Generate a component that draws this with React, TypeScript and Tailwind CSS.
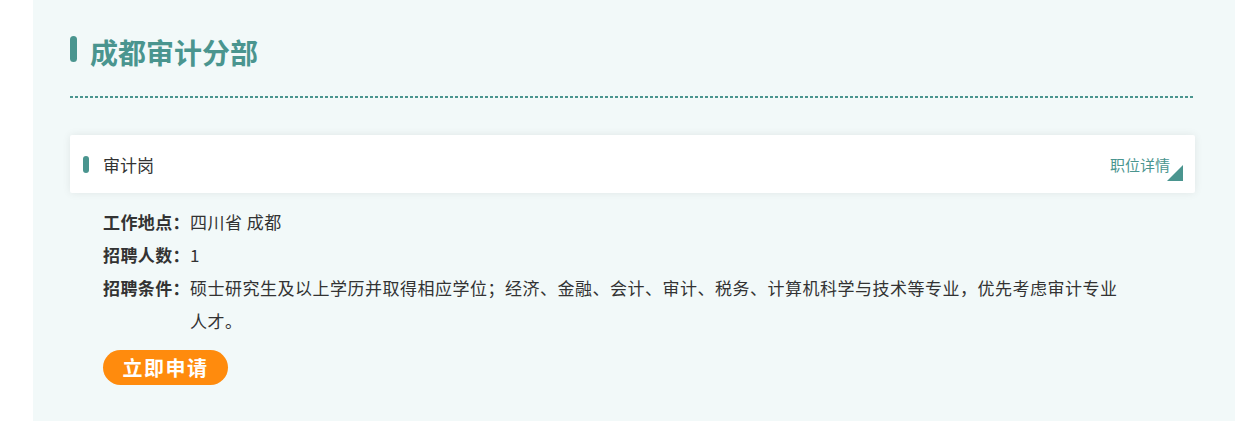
import React from 'react';

const font = { fontFamily: '"Microsoft YaHei", "Noto Sans CJK SC", "Noto Sans", sans-serif' };

const ROWS = [
  { label: '工作地点：', value: '四川省 成都' },
  { label: '招聘人数：', value: '1' },
  {
    label: '招聘条件：',
    value:
      '硕士研究生及以上学历并取得相应学位；经济、金融、会计、审计、税务、计算机科学与技术等专业，优先考虑审计专业人才。',
  },
];

export default function App() {
  return (
    <div className="flex min-h-[421px] w-full bg-white" style={font}>
      <section className="ml-[33px] flex-1 bg-[#f2f9f9] pl-[37px] pr-[40px] pt-[32px] pb-[37px]">
        {/* Header */}
        <div className="flex h-[34px] items-center">
          <span className="h-[26px] w-[7px] rounded-full bg-[#4a958f]" />
          <h2 className="ml-[13px] mt-[6px] text-[28px] font-bold leading-[34px] text-[#4a958f]">
            成都审计分部
          </h2>
        </div>
        <div className="mt-[30px] h-[2px] w-[1123px] bg-[linear-gradient(to_right,#4a958f_60%,transparent_60%)] bg-[length:5px_2px]" />

        {/* Job card */}
        <div className="relative mt-[37px] flex h-[58px] items-center rounded-[2px] bg-white pl-[13px] pr-[25px] shadow-[0_0_8px_rgba(0,0,0,0.08)]">
          <span className="h-[17px] w-[6px] rounded-full bg-[#4a958f]" />
          <span className="ml-[14px] mt-[2px] text-[17px] text-[#333]">审计岗</span>
          <span className="ml-auto mt-[2px] text-[15px] text-[#4a958f]">职位详情</span>
          <span className="absolute bottom-[12px] right-[12px] h-0 w-0 border-b-[16px] border-l-[16px] border-b-[#4a958f] border-l-transparent" />
        </div>

        {/* Details */}
        <div className="mt-[12px] pl-[33px] text-[17px] leading-[33px] text-[#333]">
          {ROWS.map((row) => (
            <div key={row.label} className="flex">
              <span className="w-[87px] shrink-0 font-bold tracking-[0.4px]">{row.label}</span>
              <span className="w-[938px] tracking-[0.5px]">{row.value}</span>
            </div>
          ))}
          <button
            type="button"
            className="mt-[13px] flex h-[35px] w-[125px] items-center justify-center rounded-full bg-[#ff8b0d] text-[20px] font-bold tracking-[1.5px] text-white"
          >
            立即申请
          </button>
        </div>
      </section>
    </div>
  );
}
